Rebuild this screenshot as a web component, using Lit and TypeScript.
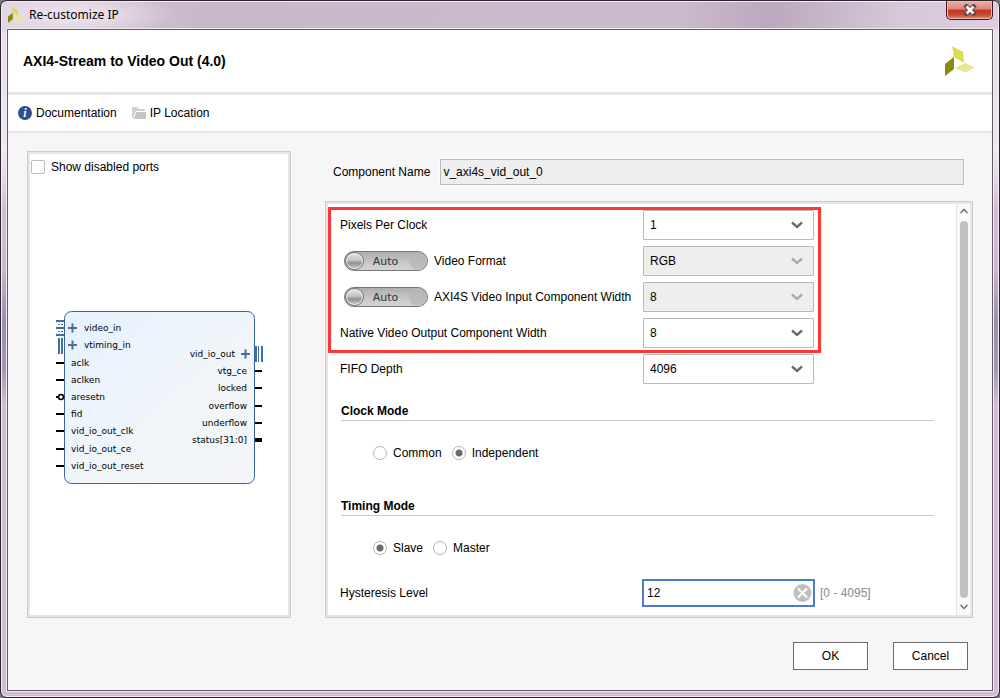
import { LitElement, html, css, svg, nothing } from "lit";
import { customElement, property, state } from "lit/decorators.js";

const logoShapes = svg`
  <polygon points="7,0 18,6 19,17 9,11" fill="#dcdd52"></polygon>
  <polygon points="0,18 9,11 9,23 0,30" fill="#8a8a0c"></polygon>
  <polygon points="10,22 20,17 30,21.5 20,26.5" fill="#e6e890"></polygon>
`;

@customElement("ip-select")
class IpSelect extends LitElement {
  @property() label = "";
  @property() value = "";
  @property({ type: Boolean }) auto = false;

  static styles = css`
    :host { display: block; }
    .row { display: grid; grid-template-columns: 303px 171px; align-items: center; height: 30px; }
    .name { display: flex; align-items: center; gap: 6px; white-space: nowrap; }
    .toggle {
      display: flex; align-items: center; box-sizing: border-box; width: 84px; height: 20px; margin: 0 0 0 4px; padding: 0;
      border: 1px solid #777; border-radius: 10px; font: 11px "DejaVu Sans", sans-serif; color: #333;
      background: linear-gradient(#adadad, #cdcdcd 70%, #d2d2d2);
    }
    .knob {
      box-sizing: border-box; width: 19px; height: 18px; border: 1px solid #777; border-radius: 50%;
      background: linear-gradient(#e6e6e6, #c4c4c4 45%, #909090 62%, #cacaca); box-shadow: inset 0 0 0 1px #f4f4f4;
    }
    .word { flex: 1; padding-right: 2px; text-align: center; }
    .well { width: 18px; height: 18px; border-radius: 50%; background: linear-gradient(#b4b4b4, #bfbfbf); }
    .box { display: grid; }
    .field, .chevron { grid-area: 1 / 1; }
    .field {
      appearance: none; box-sizing: border-box; width: 100%; height: 30px; margin: 0; padding: 0 30px 0 6px;
      border: 1px solid #b9b9b9; border-radius: 1px; background: #fff; color: #000; font: inherit; outline: 0; opacity: 1;
    }
    .field:disabled { background: #eee; }
    .chevron { justify-self: end; align-self: center; margin-right: 11px; pointer-events: none; stroke: #6c6c6c; }
    .off { stroke: #a9a9a9; }
  `;

  render() {
    return html`<div class="row">
      <div class="name">
        ${this.auto
          ? html`<button class="toggle" type="button" role="switch" aria-checked="false" aria-label="${this.label} auto">
              <span class="knob"></span><span class="word">Auto</span><span class="well"></span>
            </button>`
          : nothing}
        <label for="field">${this.label}</label>
      </div>
      <div class="box">
        <select class="field" id="field" ?disabled=${this.auto}><option>${this.value}</option></select>
        <svg class="chevron ${this.auto ? "off" : ""}" width="12" height="8" fill="none" stroke-width="2.4">
          <path d="M1 1.5 L6 6 L11 1.5"></path>
        </svg>
      </div>
    </div>`;
  }
}

@customElement("ip-choice")
class IpChoice extends LitElement {
  @property() heading = "";
  @property({ attribute: false }) options: string[] = [];
  @state() selected = "";
  @property() initial = "";

  static styles = css`
    :host { display: block; }
    .group { margin: 0; padding: 0; border: 0; min-width: 0; }
    .heading { box-sizing: border-box; width: 100%; height: 18px; padding: 0; border-bottom: 1px solid #ccc; font-weight: bold; line-height: 16px; }
    .options { display: flex; gap: 10px; padding: 24px 0 0 32px; }
    .option { display: flex; align-items: center; gap: 6px; height: 16px; }
    .dot {
      appearance: none; box-sizing: border-box; width: 14px; height: 14px; margin: 0;
      border: 1px solid #b4b4b4; border-radius: 50%; background: #fff;
    }
    .dot:checked { background: radial-gradient(circle, #6a6a6a 3px, #fff 4px); }
  `;

  render() {
    const current = this.selected || this.initial;
    return html`<fieldset class="group">
      <legend class="heading">${this.heading}</legend>
      <div class="options">
        ${this.options.map(
          (o) => html`<label class="option">
            <input class="dot" type="radio" name="choice" .checked=${o === current} @change=${() => (this.selected = o)} />${o}
          </label>`
        )}
      </div>
    </fieldset>`;
  }
}

@customElement("ip-symbol")
class IpSymbol extends LitElement {
  static styles = css`
    :host { display: block; }
    .symbol { display: block; font: 9px "DejaVu Sans", sans-serif; }
    .right { text-anchor: end; }
    .bus { fill: #3f6fa3; }
    .plus { stroke: #34558f; stroke-width: 2; opacity: 0.85; }
  `;

  render() {
    const left = ["aclk", "aclken", "aresetn", "fid", "vid_io_out_clk", "vid_io_out_ce", "vid_io_out_reset"];
    const leftY = [52, 69, 86, 103, 120, 138, 155];
    const right = ["vtg_ce", "locked", "overflow", "underflow", "status[31:0]"];
    const rightY = [60, 77, 95, 112, 129];
    return html`<svg class="symbol" width="208" height="174" role="img" aria-label="IP symbol">
      <defs>
        <linearGradient id="fill" x1="0" y1="0" x2="1" y2="1">
          <stop offset="0" stop-color="#e6f2ff"></stop>
          <stop offset="0.6" stop-color="#f1f5f9"></stop>
          <stop offset="1" stop-color="#f4f6f8"></stop>
        </linearGradient>
      </defs>
      <g class="bus">
        <rect x="1" y="9" width="8" height="2"></rect><rect x="1" y="16" width="8" height="2"></rect>
        <rect x="1" y="23" width="8" height="2"></rect>
        <rect x="3" y="13" width="2" height="1"></rect><rect x="6" y="13" width="2" height="1"></rect>
        <rect x="3" y="20" width="2" height="1"></rect><rect x="6" y="20" width="2" height="1"></rect>
        <rect x="3" y="27" width="2" height="16"></rect><rect x="6" y="27" width="2" height="16"></rect>
        <rect x="200" y="35" width="2" height="16"></rect><rect x="203" y="35" width="1" height="16"></rect>
        <rect x="206" y="35" width="2" height="16"></rect>
      </g>
      <rect x="9.5" y="0.5" width="190" height="172" rx="7" fill="url(#fill)" stroke="#3c62a6"></rect>
      <g class="plus">
        <path d="M13 17H22M17.5 12.5V21.5"></path>
        <path d="M13 34H22M17.5 29.5V38.5"></path>
        <path d="M186 43H195M190.5 38.5V47.5"></path>
      </g>
      <text x="29" y="20">video_in</text>
      <text x="29" y="37">vtiming_in</text>
      ${left.map(
        (t, i) => svg`${t === "aresetn"
            ? svg`<path d="M1 86H3" stroke="#000" stroke-width="2"></path><circle cx="6" cy="86" r="2.5" fill="#fff" stroke="#000" stroke-width="1.5"></circle>`
            : svg`<rect x="1" y=${leftY[i] - 1} width="8" height="2"></rect>`}
          <text x="16" y=${leftY[i] + 3}>${t}</text>`
      )}
      <text class="right" x="180" y="46">vid_io_out</text>
      ${right.map(
        (t, i) => svg`<rect x="200" y=${rightY[i] - (i === 4 ? 2 : 1)} width="7" height=${i === 4 ? 4 : 2}></rect>
          <text class="right" x="192" y=${rightY[i] + 3}>${t}</text>`
      )}
    </svg>`;
  }
}

@customElement("app-root")
class AppRoot extends LitElement {
  static styles = css`
    :host { display: block; background: #777; font: 12px/16px "Liberation Sans", Arial, sans-serif; color: #000; }
    .window {
      display: flex; flex-direction: column; box-sizing: border-box; min-height: 100vh; padding: 0 6px 6px;
      border: 1px solid #2b262d; border-radius: 7px; box-shadow: inset 0 0 0 1px #f4edf5;
      background:
        radial-gradient(ellipse 100px 24px at 74px 14px, #efe7f0, transparent),
        linear-gradient(100deg, #e0d3e1, #c9b7ca 20%, #cbb9cd 68%, #bba8be 77%, #d6c8d9 90%, #ddcfe0) 0 0 / 100% 29px no-repeat,
        linear-gradient(#e6dce7, #efe9f0 22%, #d2bed5 30%, #cdb8d0 38%, #9b90b0 46%, #a497b6 53%, #d2bed5 58%, #d2bed5);
    }
    .titlebar { display: flex; align-items: center; gap: 5px; height: 28px; padding-left: 1px; font: 12px/16px "Noto Sans", sans-serif; }
    .title { flex: 1; margin: 0; font: inherit; }
    .mark { display: block; }
    .close {
      align-self: flex-start; display: grid; place-items: center; box-sizing: border-box; width: 47px; height: 19px; margin: 0; padding: 0;
      border: 1px solid #4a1518; border-top: 0; border-radius: 0 0 5px 5px; box-shadow: inset 0 0 0 1px #f3b9af;
      background: linear-gradient(#eeb0a4, #dd8478 45%, #bf3526 50%, #c44a32 75%, #de8b68);
    }
    .content { flex: 1; display: flex; flex-direction: column; border: 1px solid #665c68; background: #f6f6f6; box-shadow: 0 0 0 1px #f1e8f2; }
    .header { display: flex; align-items: center; justify-content: space-between; height: 62px; padding: 0 17px 0 15px; border-bottom: 3px solid #e6e6e6; background: #fff; }
    .heading { margin: 0; font-size: 14px; line-height: 18px; }
    .toolbar { display: flex; align-items: center; gap: 15px; height: 36px; padding: 0 10px; border-bottom: 2px solid #e6e6e6; background: #fff; }
    .link { display: flex; align-items: center; gap: 4px; color: #000; text-decoration: none; }
    .main { flex: 1; display: flex; gap: 34px; padding: 18px 19px 24px; }
    .panel { box-sizing: border-box; border: 1px solid #ccc; background: #fff; box-shadow: inset 0 0 0 2px #e6e6e6; padding: 2px; }
    .preview { display: flex; flex-direction: column; width: 264px; }
    .check { display: flex; align-items: center; gap: 6px; height: 26px; padding-left: 1px; }
    .tick { appearance: none; box-sizing: border-box; width: 14px; height: 14px; margin: 0; border: 1px solid #bdbdbd; border-radius: 2px; background: #fff; }
    .stage { flex: 1; display: grid; place-items: center; }
    .config { flex: 1; display: flex; flex-direction: column; gap: 16px; padding-top: 8px; min-width: 0; }
    .component { display: flex; align-items: center; gap: 10px; padding: 0 9px 0 8px; }
    .component-input {
      flex: 1; min-width: 0; box-sizing: border-box; height: 26px; padding: 0 2px; border: 1px solid #b9b9b9; outline: 0;
      background: #eee; color: #000; font: inherit; box-shadow: 0 0 0 1px #fdfdfd;
    }
    .settings { flex: 1; display: flex; }
    .form { flex: 1; padding-top: 3px; }
    .marked { display: grid; gap: 6px; width: fit-content; padding: 0 4px 2px 9px; border: 3px solid #ff3636; }
    .plain { padding: 1px 0 0 12px; }
    .choice { padding: 19px 22px 0 13px; }
    .later { padding-top: 37px; }
    .hysteresis { display: grid; grid-template-columns: 302px 173px auto; align-items: center; padding: 23px 0 0 12px; }
    .number { display: flex; align-items: center; box-sizing: border-box; height: 28px; padding-right: 1px; border: 2px solid #4c7dcc; background: #fff; }
    .number-input { flex: 1; min-width: 0; padding: 0 3px; border: 0; outline: 0; background: none; font: inherit; color: #000; }
    .clear { display: grid; margin: 0; padding: 0; border: 0; background: none; }
    .range { padding-left: 5px; color: #8a8a8a; }
    .scroll { display: flex; flex-direction: column; align-items: center; width: 13px; border-left: 1px solid #e4e4e4; background: #fafafa; }
    .arrow { display: grid; place-items: center; box-sizing: border-box; width: 12px; height: 17px; margin: 0; padding: 0; border: 0; background: none; }
    .up { padding-bottom: 3px; }
    .thumb { flex: 1; width: 8px; border-radius: 4px; background: #c1c1c1; }
    .footer { display: flex; justify-content: flex-end; gap: 25px; padding: 0 24px 20px; }
    .action { box-sizing: border-box; width: 75px; height: 28px; margin: 0; padding: 0; border: 1px solid #6b6b6b; background: #fff; color: #000; font: inherit; }
  `;

  render() {
    return html`<div class="window">
      <div class="titlebar">
        <svg class="mark" width="16" height="16" viewBox="0 0 30 30" aria-hidden="true">${logoShapes}</svg>
        <h1 class="title">Re-customize IP</h1>
        <button class="close" type="button" aria-label="Close">
          <svg width="14" height="12" fill="none">
            <path d="M3.5 2.5 L10.5 9.5 M10.5 2.5 L3.5 9.5" stroke="#4f4a57" stroke-width="4.5" stroke-linecap="square"></path>
            <path d="M3.5 2.5 L10.5 9.5 M10.5 2.5 L3.5 9.5" stroke="#fff" stroke-width="2.5"></path>
          </svg>
        </button>
      </div>
      <div class="content">
        <header class="header">
          <h2 class="heading">AXI4-Stream to Video Out (4.0)</h2>
          <svg width="30" height="30" aria-hidden="true">${logoShapes}</svg>
        </header>
        <nav class="toolbar">
          <a class="link" href="#documentation">
            <svg width="14" height="14" aria-hidden="true">
              <circle cx="7" cy="7" r="7" fill="#2f4f8c"></circle>
              <text x="7" y="11" text-anchor="middle" fill="#fff" font-family="Liberation Serif, serif" font-size="12" font-style="italic" font-weight="bold">i</text>
            </svg>Documentation</a>
          <a class="link" href="#location">
            <svg width="14" height="12" aria-hidden="true">
              <path d="M0 1 Q0 0 1 0 H5 L7 2 H12 Q13 2 13 3 V4 H4 L1 11 H0 Z" fill="#cfcfcf"></path>
              <path d="M4.5 5 H14 V10.5 Q14 12 12.5 12 H1.5 Z" fill="#c6c6c6"></path>
            </svg>IP Location</a>
        </nav>
        <main class="main">
          <section class="panel preview">
            <label class="check"><input class="tick" type="checkbox" />Show disabled ports</label>
            <div class="stage"><ip-symbol></ip-symbol></div>
          </section>
          <section class="config">
            <div class="component">
              <label for="component">Component Name</label>
              <input class="component-input" id="component" type="text" readonly value="v_axi4s_vid_out_0" />
            </div>
            <div class="panel settings">
              <div class="form">
                <div class="marked">
                  <ip-select label="Pixels Per Clock" value="1"></ip-select>
                  <ip-select label="Video Format" value="RGB" auto></ip-select>
                  <ip-select label="AXI4S Video Input Component Width" value="8" auto></ip-select>
                  <ip-select label="Native Video Output Component Width" value="8"></ip-select>
                </div>
                <div class="plain"><ip-select label="FIFO Depth" value="4096"></ip-select></div>
                <div class="choice">
                  <ip-choice heading="Clock Mode" initial="Independent" .options=${["Common", "Independent"]}></ip-choice>
                </div>
                <div class="choice later">
                  <ip-choice heading="Timing Mode" initial="Slave" .options=${["Slave", "Master"]}></ip-choice>
                </div>
                <div class="hysteresis">
                  <label for="level">Hysteresis Level</label>
                  <div class="number">
                    <input class="number-input" id="level" type="text" value="12" />
                    <button class="clear" type="button" aria-label="Clear">
                      <svg width="19" height="18">
                        <circle cx="9.5" cy="9" r="9" fill="#bfbfbf"></circle>
                        <path d="M5 4.5 L14 13.5 M14 4.5 L5 13.5" stroke="#fff" stroke-width="2"></path>
                      </svg>
                    </button>
                  </div>
                  <span class="range">[0 - 4095]</span>
                </div>
              </div>
              <div class="scroll">
                <button class="arrow up" type="button" aria-label="Scroll up">
                  <svg width="8" height="6" fill="none" stroke="#6c6c6c" stroke-width="1.5"><path d="M0.5 5 L4 1.5 L7.5 5"></path></svg>
                </button>
                <div class="thumb"></div>
                <button class="arrow" type="button" aria-label="Scroll down">
                  <svg width="8" height="6" fill="none" stroke="#6c6c6c" stroke-width="1.5"><path d="M0.5 1 L4 4.5 L7.5 1"></path></svg>
                </button>
              </div>
            </div>
          </section>
        </main>
        <footer class="footer">
          <button class="action" type="button">OK</button>
          <button class="action" type="button">Cancel</button>
        </footer>
      </div>
    </div>`;
  }
}
